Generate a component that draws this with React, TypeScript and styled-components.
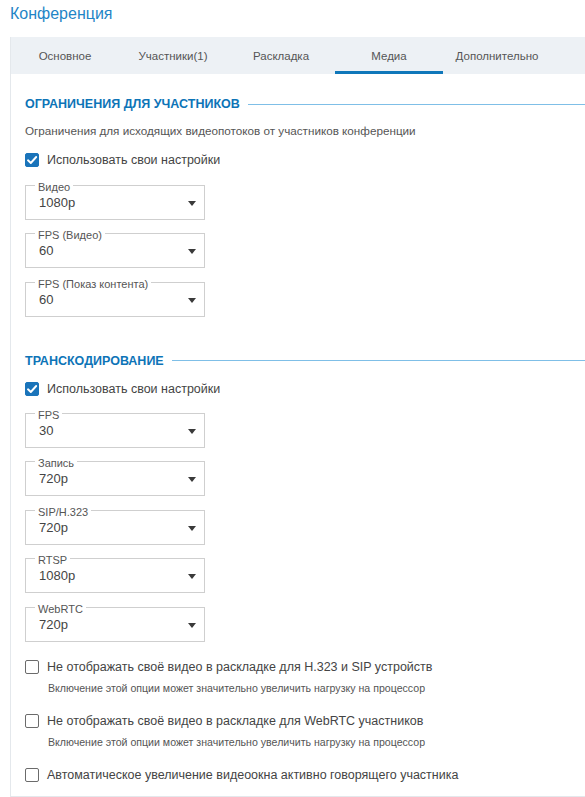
import React from "react";
import styled, { createGlobalStyle } from "styled-components";

const Global = createGlobalStyle`
  html, body {
    margin: 0;
    padding: 0;
    background: #fff;
    overflow: hidden;
  }
  body {
    font-family: "Liberation Sans", Arial, sans-serif;
    color: #444;
  }
`;

const Page = styled.div`
  width: 585px;
  height: 797px;
  overflow: hidden;
`;

const Title = styled.h1`
  margin: 0 0 9px 0;
  padding-left: 10px;
  font-size: 16px;
  line-height: 28px;
  font-weight: normal;
  color: #1f85c6;
`;

const Panel = styled.div`
  margin-left: 10px;
  width: 640px;
  border-left: 1px solid #e4e8ec;
  border-bottom: 1px solid #e4e8ec;
`;

const TabBar = styled.div`
  display: flex;
  height: 37px;
  background: #edf1f5;
`;

const Tab = styled.div<{ $active?: boolean }>`
  width: 108px;
  text-align: center;
  font-size: 11.5px;
  line-height: 38px;
  color: #555;
  box-shadow: ${(p) => (p.$active ? "inset 0 -3px 0 #0f77ba" : "none")};
`;

const Content = styled.div`
  padding: 0 0 12px 14px;
`;

const Section = styled.section<{ $mt: number }>`
  margin-top: ${(p) => p.$mt}px;
`;

const SectionHeader = styled.div`
  display: flex;
  align-items: center;
  gap: 8px;
  height: 16px;
`;

const SectionTitle = styled.h2`
  margin: 0;
  font-size: 12.5px;
  line-height: 16px;
  font-weight: bold;
  color: #0d74b7;
  white-space: nowrap;
`;

const SectionLine = styled.div`
  flex: 1;
  height: 1px;
  background: #7fbfe7;
`;

const Description = styled.p`
  margin: 11px 0 0 0;
  font-size: 11.7px;
  line-height: 16px;
  color: #555;
`;

const CheckRow = styled.label<{ $mt: number }>`
  display: flex;
  align-items: center;
  gap: 8px;
  height: 18px;
  margin-top: ${(p) => p.$mt}px;
`;

const Box = styled.span<{ $checked?: boolean }>`
  box-sizing: border-box;
  width: 14px;
  height: 14px;
  border-radius: 2px;
  flex: none;
  display: flex;
  align-items: center;
  justify-content: center;
  background: ${(p) => (p.$checked ? "#1a74ba" : "#fff")};
  border: 1px solid ${(p) => (p.$checked ? "#1a74ba" : "#6b6b6b")};
`;

const CheckLabel = styled.span`
  font-size: 12.5px;
  line-height: 18px;
  color: #444;
  white-space: nowrap;
`;

const Hint = styled.div`
  margin: 5px 0 0 23px;
  font-size: 10.6px;
  line-height: 14px;
  color: #555;
  white-space: nowrap;
`;

const SelectList = styled.div<{ $mt: number }>`
  display: flex;
  flex-direction: column;
  gap: 13.5px;
  margin-top: ${(p) => p.$mt}px;
`;

const SelectBox = styled.div`
  position: relative;
  box-sizing: border-box;
  width: 180px;
  height: 35px;
  border: 1px solid #cfcfcf;
  display: flex;
  align-items: center;
  justify-content: space-between;
  padding: 0 8px 0 13px;
`;

const SelectLabel = styled.span`
  position: absolute;
  left: 9px;
  top: -4px;
  padding: 0 3px;
  background: #fff;
  font-size: 11px;
  line-height: 11px;
  color: #555;
  white-space: nowrap;
`;

const SelectValue = styled.span`
  font-size: 13px;
  line-height: 16px;
  color: #444;
  margin-top: 1px;
`;

const Arrow = styled.span`
  width: 0;
  height: 0;
  border-left: 4.5px solid transparent;
  border-right: 4.5px solid transparent;
  border-top: 5px solid #3a3a3a;
  margin-top: 2px;
`;

const Check = () => (
  <svg width="12" height="12" viewBox="0 0 12 12">
    <path d="M2 6.3 L4.8 9 L10.2 3" fill="none" stroke="#fff" strokeWidth="1.9" strokeLinecap="round" strokeLinejoin="round" />
  </svg>
);

const Select = ({ label, value }: { label: string; value: string }) => (
  <SelectBox>
    <SelectLabel>{label}</SelectLabel>
    <SelectValue>{value}</SelectValue>
    <Arrow />
  </SelectBox>
);

const tabs = ["Основное", "Участники(1)", "Раскладка", "Медиа", "Дополнительно"];

export default function App() {
  return (
    <Page>
      <Global />
      <Title>Конференция</Title>
      <Panel>
        <TabBar>
          {tabs.map((t) => (
            <Tab key={t} $active={t === "Медиа"}>
              {t}
            </Tab>
          ))}
        </TabBar>
        <Content>
          <Section $mt={22}>
            <SectionHeader>
              <SectionTitle>ОГРАНИЧЕНИЯ ДЛЯ УЧАСТНИКОВ</SectionTitle>
              <SectionLine />
            </SectionHeader>
            <Description>Ограничения для исходящих видеопотоков от участников конференции</Description>
            <CheckRow $mt={12}>
              <Box $checked>
                <Check />
              </Box>
              <CheckLabel>Использовать свои настройки</CheckLabel>
            </CheckRow>
            <SelectList $mt={15.5}>
              <Select label="Видео" value="1080p" />
              <Select label="FPS (Видео)" value="60" />
              <Select label="FPS (Показ контента)" value="60" />
            </SelectList>
          </Section>
          <Section $mt={36}>
            <SectionHeader>
              <SectionTitle>ТРАНСКОДИРОВАНИЕ</SectionTitle>
              <SectionLine />
            </SectionHeader>
            <CheckRow $mt={11}>
              <Box $checked>
                <Check />
              </Box>
              <CheckLabel>Использовать свои настройки</CheckLabel>
            </CheckRow>
            <SelectList $mt={15}>
              <Select label="FPS" value="30" />
              <Select label="Запись" value="720p" />
              <Select label="SIP/H.323" value="720p" />
              <Select label="RTSP" value="1080p" />
              <Select label="WebRTC" value="720p" />
            </SelectList>
            <CheckRow $mt={16}>
              <Box />
              <CheckLabel>Не отображать своё видео в раскладке для H.323 и SIP устройств</CheckLabel>
            </CheckRow>
            <Hint>Включение этой опции может значительно увеличить нагрузку на процессор</Hint>
            <CheckRow $mt={17}>
              <Box />
              <CheckLabel>Не отображать своё видео в раскладке для WebRTC участников</CheckLabel>
            </CheckRow>
            <Hint>Включение этой опции может значительно увеличить нагрузку на процессор</Hint>
            <CheckRow $mt={17}>
              <Box />
              <CheckLabel>Автоматическое увеличение видеоокна активно говорящего участника</CheckLabel>
            </CheckRow>
          </Section>
        </Content>
      </Panel>
    </Page>
  );
}
